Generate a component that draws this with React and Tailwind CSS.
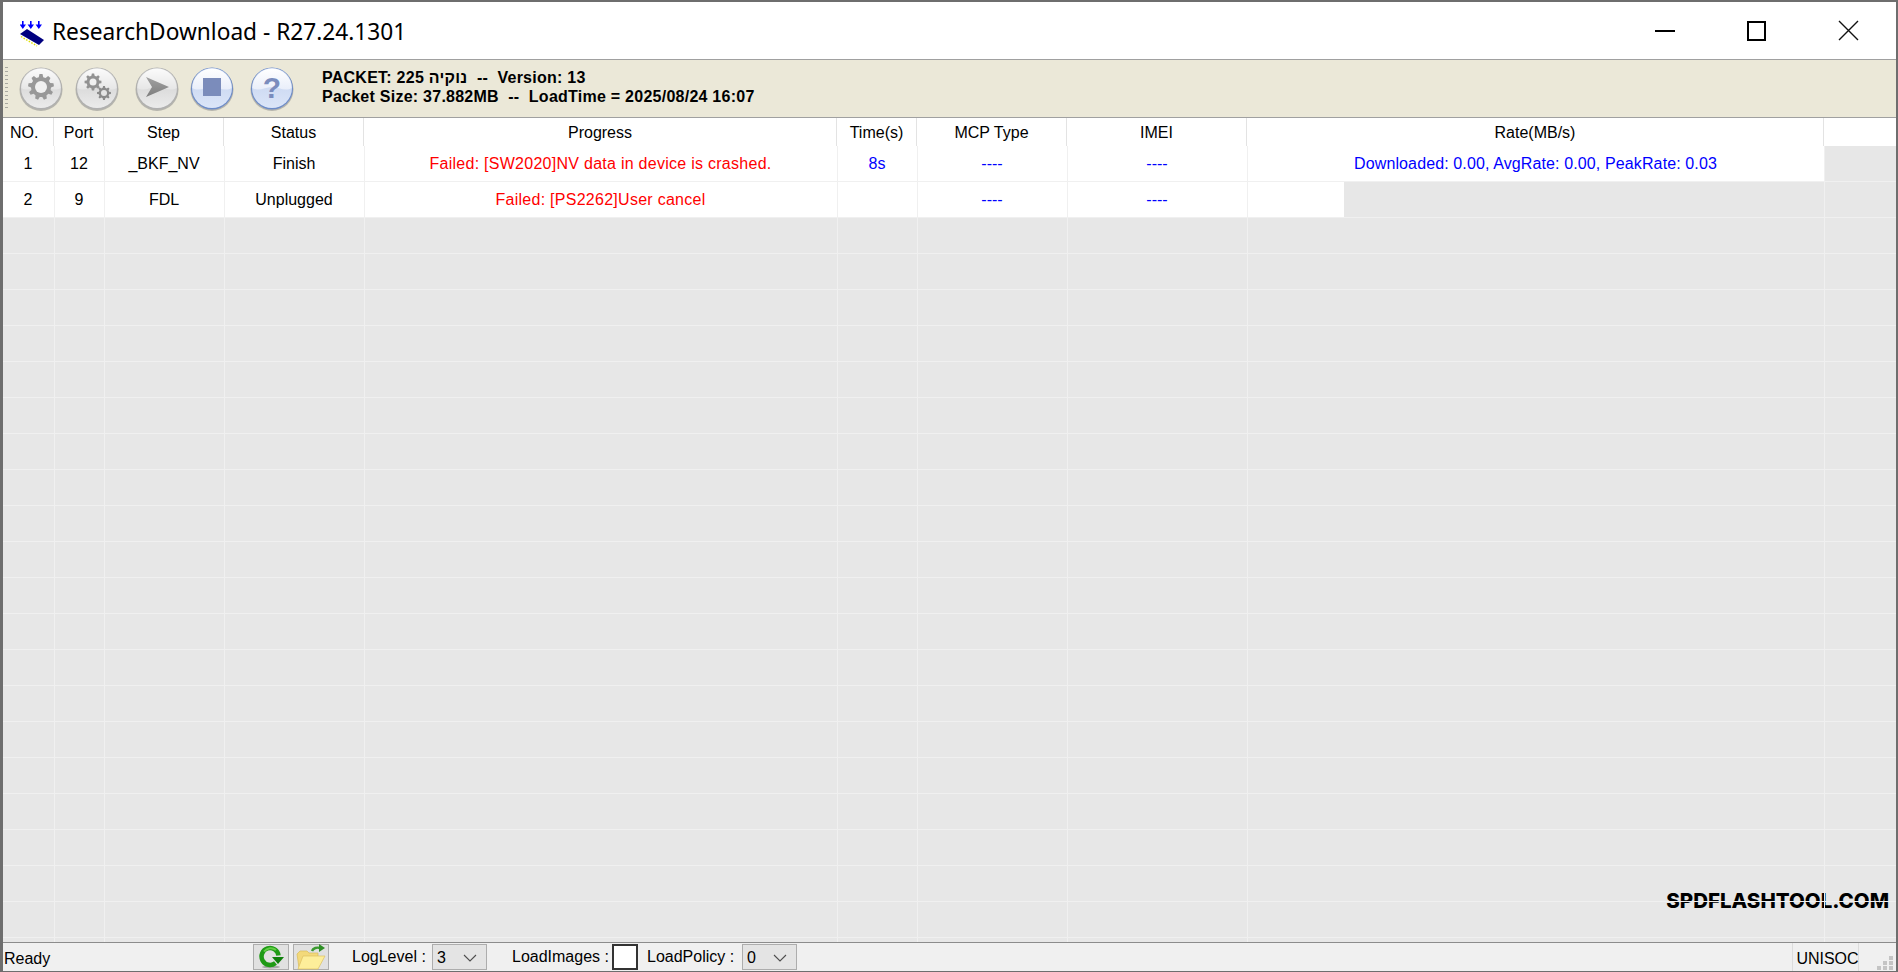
import React from 'react';

const columns = [
  { key: 'no', label: 'NO.', head: 'w-[51px] justify-start pl-[7px]', cell: 'w-[52px]' },
  { key: 'port', label: 'Port', head: 'w-[50px]', cell: 'w-[50px]' },
  { key: 'step', label: 'Step', head: 'w-[120px]', cell: 'w-[120px]' },
  { key: 'status', label: 'Status', head: 'w-[140px]', cell: 'w-[140px]' },
  { key: 'progress', label: 'Progress', head: 'w-[473px]', cell: 'w-[473px]' },
  { key: 'time', label: 'Time(s)', head: 'w-[80px]', cell: 'w-[80px]' },
  { key: 'mcp', label: 'MCP Type', head: 'w-[150px]', cell: 'w-[150px]' },
  { key: 'imei', label: 'IMEI', head: 'w-[180px]', cell: 'w-[180px]' },
  { key: 'rate', label: 'Rate(MB/s)', head: 'w-[577px]', cell: 'w-[577px]' },
];

const rows = [
  {
    no: '1',
    port: '12',
    step: '_BKF_NV',
    status: 'Finish',
    progress: 'Failed: [SW2020]NV data in device is crashed.',
    time: '8s',
    mcp: '----',
    imei: '----',
    rate: 'Downloaded: 0.00, AvgRate: 0.00, PeakRate: 0.03',
  },
  {
    no: '2',
    port: '9',
    step: 'FDL',
    status: 'Unplugged',
    progress: 'Failed: [PS2262]User cancel',
    time: '',
    mcp: '----',
    imei: '----',
    rate: '',
    partialRate: true,
  },
];

const textColor = {
  progress: 'text-[#ff0000] tracking-[0.27px]',
  time: 'text-[#0000ff]',
  mcp: 'text-[#0000ff]',
  imei: 'text-[#0000ff]',
  rate: 'text-[#0000ff] tracking-[0.12px]',
};

const emptyRows = Array.from({ length: 21 }, (_, i) => i);

function gearPath(cx, cy, outer, inner, teeth) {
  const pts = [];
  const step = (Math.PI * 2) / teeth;
  for (let i = 0; i < teeth; i++) {
    const a = i * step - Math.PI / 2;
    const corners = [
      [inner, a - step * 0.32],
      [outer, a - step * 0.17],
      [outer, a + step * 0.17],
      [inner, a + step * 0.32],
    ];
    corners.forEach(([r, t]) => {
      pts.push(`${(cx + r * Math.cos(t)).toFixed(2)} ${(cy + r * Math.sin(t)).toFixed(2)}`);
    });
  }
  return `M${pts.join('L')}Z`;
}

function GelButton({ tint = 'gray', children }) {
  const blue = tint === 'blue';
  const top = `gel-top-${tint}`;
  const low = `gel-low-${tint}`;
  return (
    <svg width="46" height="48" viewBox="0 0 46 48" className="shrink-0">
      <defs>
        <linearGradient id={top} x1="0" y1="0" x2="0" y2="1">
          <stop offset="0" stopColor={blue ? '#ffffff' : '#fbfbfb'} />
          <stop offset="1" stopColor={blue ? '#e9eefa' : '#e6e6e6'} />
        </linearGradient>
        <linearGradient id={low} x1="0" y1="0" x2="0" y2="1">
          <stop offset="0" stopColor={blue ? '#c3d2ee' : '#cbcbcb'} />
          <stop offset="1" stopColor={blue ? '#dbe5f8' : '#ebebeb'} />
        </linearGradient>
        <linearGradient id="plane-fill" x1="0" y1="0" x2="0" y2="1">
          <stop offset="0" stopColor="#a2a2a2" />
          <stop offset="1" stopColor="#7d7d7d" />
        </linearGradient>
      </defs>
      <circle cx="23" cy="24.500" r="21.500" fill="#8a8a8a" opacity="0.55" />
      <circle cx="23" cy="23.500" r="21" fill={blue ? '#6d8cc8' : '#b0b0b0'} />
      <circle cx="23" cy="23" r="20" fill={`url(#${low})`} />
      <path d="M3.400 23a19.600 19.600 0 0 1 39.200 0c-6 4-13-1-19.600-1s-13.600 5-19.600 1z" fill={`url(#${top})`} />
      {children}
    </svg>
  );
}

function AppIcon() {
  return (
    <svg width="26" height="26" viewBox="0 0 26 26" className="shrink-0">
      <path d="M2 0h1.600v3.500H6L2.800 8 -0.400 3.500H2zM10 0h1.600v3.500H14L10.800 8 7.600 3.500H10zM18 0h1.600v3.500H22L18.800 8 15.600 3.500H18z" fill="#0000ff" />
      <path d="M0 13l7-5 17 11-5 5z" fill="#00007f" />
      <path d="M1 15.500l16 9.500" stroke="#dede00" strokeWidth="1.400" strokeDasharray="1.500 1.500" fill="none" />
    </svg>
  );
}

function RefreshIcon() {
  return (
    <svg width="26" height="24" viewBox="0 0 26 24">
      <ellipse cx="13" cy="22" rx="9" ry="1.500" fill="#a8a8a8" />
      <path d="M20.500 10.500a8.500 8.500 0 1 0-3 7.500" fill="none" stroke="#1f9a16" strokeWidth="4.500" />
      <path d="M6 6.500a8.500 8.500 0 0 1 12-1.500" fill="none" stroke="#63cf45" strokeWidth="2" />
      <path d="M14 12h12l-6 7z" fill="#0f7f0c" />
    </svg>
  );
}

function OpenFolderIcon() {
  return (
    <svg width="32" height="26" viewBox="0 0 32 26">
      <path d="M4 24L2 10l3-3h7l2 2h9v4z" fill="#f3d97a" stroke="#d9bb5a" strokeWidth="0.700" />
      <path d="M8 12h22l-7 13H3z" fill="#fdee9a" stroke="#dcc060" strokeWidth="0.700" />
      <path d="M17 7c1-3 5-4 8-3" fill="none" stroke="#3b9a30" strokeWidth="2.400" />
      <path d="M24 0l6 4-6 4z" fill="#2f8f26" />
    </svg>
  );
}

function Chevron() {
  return (
    <svg width="14" height="8" viewBox="0 0 14 8">
      <path d="M1 1l6 6 6-6" fill="none" stroke="#4d4d4d" strokeWidth="1.100" />
    </svg>
  );
}

function Combo({ value }) {
  return (
    <div className="flex h-[26px] w-[55px] items-center justify-between border border-[#adadad] bg-[#e4e4e4] pl-[4px] pr-[9px] pt-[2px] text-[16px]">
      <span>{value}</span>
      <Chevron />
    </div>
  );
}

function ToolButton({ children, className }) {
  return (
    <div className={`flex h-[26px] w-[36px] items-center justify-center border border-[#adadad] bg-[#e1e1e1] ${className}`}>
      {children}
    </div>
  );
}

export default function App() {
  return (
    <div className="flex h-[972px] w-[1898px] flex-col overflow-hidden border-t-2 border-r-2 border-b border-l-[3px] border-t-[#6e6e6e] border-r-[#6e6e6e] border-b-[#6e6e6e] border-l-[#6e6e6e] bg-white font-['Liberation_Sans',Arial,sans-serif] text-[16px] text-black">
      {/* title bar */}
      <div className="flex h-[58px] shrink-0 items-center border-b border-[#a0a0a0] bg-white">
        <div className="ml-[17px] mt-[7px]">
          <AppIcon />
        </div>
        <span className="ml-[6px] mt-[4px] font-['Noto_Sans',sans-serif] text-[22.7px] leading-none">ResearchDownload - R27.24.1301</span>
        <div className="ml-auto mr-[37px] flex items-center">
          <div className="h-[2px] w-[20px] bg-black" />
          <div className="ml-[72px] h-[20px] w-[19px] border-2 border-black" />
          <svg width="21" height="21" viewBox="0 0 21 21" className="ml-[72px]">
            <path d="M1 1l19 19M20 1L1 20" stroke="#111" strokeWidth="1.400" />
          </svg>
        </div>
      </div>

      {/* toolbar */}
      <div className="flex h-[58px] shrink-0 items-center border-b border-[#a0a0a0] bg-[#ebe8d8]">
        <div className="ml-[2px] h-[44px] w-[3px] bg-[repeating-linear-gradient(to_bottom,#a8a8a0_0,#a8a8a0_1px,transparent_1px,transparent_4px)]" />
        <div className="ml-[10px] flex items-center">
          <GelButton>
            <path d={gearPath(23, 22, 13, 10, 9)} fill="#989898" />
            <circle cx="23" cy="22" r="6" fill="#f0f0f0" />
          </GelButton>
          <div className="ml-[10px]">
            <GelButton>
              <path d={gearPath(19, 17, 8.500, 6.500, 8)} fill="#929292" />
              <circle cx="19" cy="17" r="3.500" fill="#f0f0f0" />
              <path d={gearPath(30, 28, 7, 5.300, 8)} fill="#8a8a8a" />
              <circle cx="30" cy="28" r="3" fill="#e4e4e4" />
            </GelButton>
          </div>
          <div className="ml-[14px]">
            <GelButton>
              <path d="M12 12l23 10-23 10 6-10z" fill="url(#plane-fill)" />
            </GelButton>
          </div>
          <div className="ml-[9px]">
            <GelButton tint="blue">
              <rect x="14" y="13" width="18" height="18" fill="#7b8cbb" />
            </GelButton>
          </div>
          <div className="ml-[14px]">
            <GelButton tint="blue">
              <text x="23" y="33" textAnchor="middle" fontSize="30" fontWeight="700" fill="#7a8cbd" fontFamily="'Liberation Sans', sans-serif">?</text>
            </GelButton>
          </div>
        </div>
        <div className="ml-[27px] -mt-[4px] whitespace-pre text-[16px] font-bold leading-[19px] tracking-[0.25px]">
          <div>PACKET: 225 נוקיה  --  Version: 13</div>
          <div>Packet Size: 37.882MB  --  LoadTime = 2025/08/24 16:07</div>
        </div>
      </div>

      {/* download list */}
      <div className="relative min-h-0 flex-1 overflow-hidden bg-[#e7e7e7]">
        <div className="absolute bottom-[31px] right-[7px] whitespace-nowrap font-['Inter',sans-serif] text-[20.5px] font-extrabold leading-none text-black">SPDFLASHTOOL.COM</div>

        <div className="relative flex h-[28px] bg-white">
          {columns.map((c) => (
            <div key={c.key} className={`flex h-full shrink-0 items-center justify-center border-r border-[#e3e3e3] pt-[2px] ${c.head}`}>
              {c.label}
            </div>
          ))}
        </div>

        {rows.map((r) => (
          <div key={r.no} className="relative flex h-[36px] border-b border-[#f0f0f0]">
            {columns.map((c) =>
              c.key === 'rate' && r.partialRate ? (
                <div key={c.key} className={`h-full shrink-0 border-r border-[#f0f0f0] ${c.cell}`}>
                  <div className="h-full w-[96px] bg-white" />
                </div>
              ) : (
                <div key={c.key} className={`flex h-full shrink-0 items-center justify-center border-r border-[#f0f0f0] bg-white pr-[1px] ${c.cell} ${textColor[c.key] || ''}`}>
                  {r[c.key]}
                </div>
              ),
            )}
          </div>
        ))}

        {emptyRows.map((i) => (
          <div key={i} className="relative flex h-[36px] border-b border-[#f0f0f0]">
            {columns.map((c) => (
              <div key={c.key} className={`h-full shrink-0 border-r border-[#f0f0f0] ${c.cell}`} />
            ))}
          </div>
        ))}
      </div>

      {/* status bar */}
      <div className="flex h-[29px] shrink-0 items-center border-t border-[#8c8c8c] bg-[#f0f0f0] text-[16px]">
        <span className="ml-[1px] w-[249px] pt-[3px]">Ready</span>
        <ToolButton>
          <RefreshIcon />
        </ToolButton>
        <ToolButton className="ml-[4px]">
          <OpenFolderIcon />
        </ToolButton>
        <span className="ml-[23px] w-[80px]">LogLevel :</span>
        <Combo value="3" />
        <span className="ml-[25px] w-[100px]">LoadImages :</span>
        <div className="h-[26px] w-[26px] border-2 border-[#333333] bg-white" />
        <span className="ml-[9px] w-[95px]">LoadPolicy :</span>
        <Combo value="0" />
        <div className="ml-auto flex h-full w-[67px] items-center justify-center border-x border-[#dcdcdc] pl-[4px] pt-[3px]">UNISOC</div>
        <svg width="22" height="16" viewBox="0 0 22 16" className="ml-[15px] self-end">
          <path d="M15 1h4v4h-4zM9 6h4v4H9zM15 6h4v4h-4zM3 11h4v4H3zM9 11h4v4H9zM15 11h4v4h-4z" fill="#c4c4c4" />
        </svg>
      </div>
    </div>
  );
}
